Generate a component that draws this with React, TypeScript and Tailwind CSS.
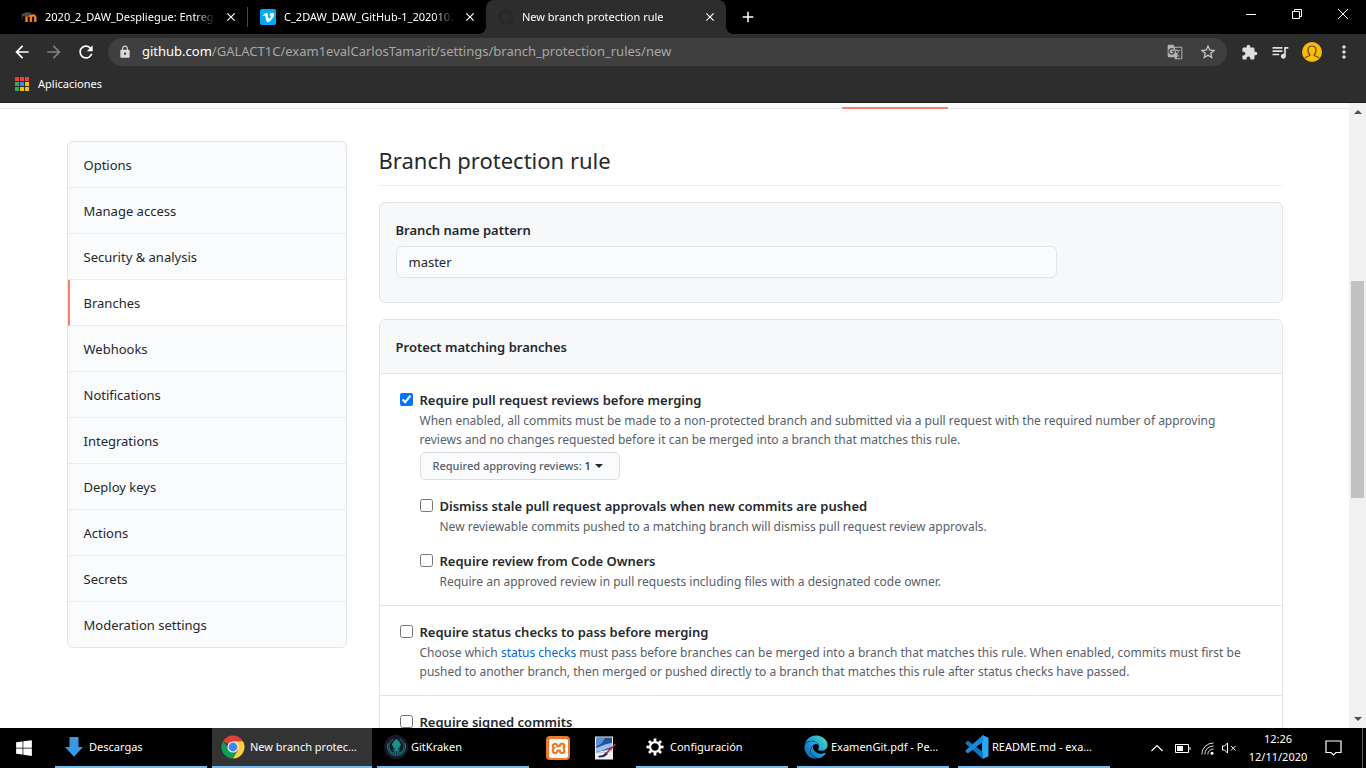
import React from "react";
import {
  MdAdd,
  MdArrowBack,
  MdArrowForward,
  MdClose,
  MdExtension,
  MdGTranslate,
  MdLock,
  MdMoreVert,
  MdQueueMusic,
  MdRefresh,
  MdStarOutline,
} from "react-icons/md";
import { FaEdge, FaGithub, FaWindows } from "react-icons/fa";
import { SiGitkraken, SiVimeo, SiXampp } from "react-icons/si";

const settingsLinks = [
  "Options",
  "Manage access",
  "Security & analysis",
  "Branches",
  "Webhooks",
  "Notifications",
  "Integrations",
  "Deploy keys",
  "Actions",
  "Secrets",
  "Moderation settings",
];

const appDots = [
  "bg-[#ea4335]", "bg-[#ea4335]", "bg-[#ea4335]",
  "bg-[#34a853]", "bg-[#4285f4]", "bg-[#fbbc05]",
  "bg-[#34a853]", "bg-[#fbbc05]", "bg-[#fbbc05]",
];

function MoodleIcon() {
  return (
    <svg viewBox="0 0 16 16" className="size-4 shrink-0" aria-hidden="true">
      <path d="M5.5 13V8.6a2.2 2.2 0 0 1 4.4 0V13M9.9 13V8.6a2.2 2.2 0 0 1 4.4 0V13" fill="none" stroke="#f98012" strokeWidth="2.4" />
      <path d="M0 5.6 6 3l5 1.2-4 3.4-3.4-.4L1.4 7.4V11H.7V6.6z" fill="#4a4a48" />
    </svg>
  );
}

function ChromeIcon() {
  return (
    <svg viewBox="0 0 24 24" className="size-6 shrink-0" aria-hidden="true">
      <path d="M12 12 2.04 6.25A11.5 11.5 0 0 1 21.96 6.25H12z" fill="#db4437" />
      <path d="M12 12H6.8L2.04 6.25A11.5 11.5 0 0 0 12 23.5L17 15z" fill="#0f9d58" />
      <path d="M12 6.25H21.96A11.5 11.5 0 0 1 12 23.5L17.2 14.8z" fill="#ffcd40" />
      <circle cx="12" cy="12" r="5.6" fill="#f1f1f1" />
      <circle cx="12" cy="12" r="4.4" fill="#4285f4" />
    </svg>
  );
}

function DownloadIcon() {
  return (
    <svg viewBox="0 0 20 22" className="h-[22px] w-5 shrink-0" aria-hidden="true">
      <path d="M5.5 1h9v10H19l-9 9.8L1 11h4.5z" fill="#3a97e4" />
    </svg>
  );
}

function KrakenIcon() {
  return (
    <span className="grid size-6 shrink-0 place-items-center rounded-full bg-[#171a2b] text-[#179287]">
      <SiGitkraken size={19} />
    </span>
  );
}

function PaintIcon() {
  return (
    <svg viewBox="0 0 22 24" className="h-6 w-[22px]" aria-hidden="true">
      <rect x="1" y="0.5" width="18" height="23" fill="#eef0f4" />
      <rect x="2" y="1.5" width="16" height="15" fill="#24509c" />
      <path d="M2 2h9l-3 5-6 4z" fill="#5d8fd6" />
      <path d="M2 12c4-1 8-4 16-5v4c-5 1-9 4-16 5z" fill="#9fc0e8" />
      <path d="M2 16.5c5-1 9-3 16-3v3.5z" fill="#dce6f2" />
      <path d="m4 20 5-1 3-3 2 2-4 3-5 .5z" fill="#1b2a5c" />
      <path d="M12 17.5 21.5 8" stroke="#c1272d" strokeWidth="1.6" />
    </svg>
  );
}

function GearIcon() {
  return (
    <svg viewBox="0 0 20 20" className="size-[18px] shrink-0" aria-hidden="true" fill="#fff">
      <circle cx="10" cy="10" r="5.5" fill="none" stroke="#fff" strokeWidth="2.6" />
      {[0, 45, 90, 135, 180, 225, 270, 315].map((a) => (
        <rect key={a} x="8.5" y="0.5" width="3" height="3.5" transform={`rotate(${a} 10 10)`} />
      ))}
    </svg>
  );
}

function EdgeIcon() {
  return (
    <>
      <svg width="0" height="0" className="absolute" aria-hidden="true">
        <linearGradient id="edge" x1="0" y1="1" x2="1" y2="0">
          <stop offset="0" stopColor="#0c59a4" />
          <stop offset="0.5" stopColor="#1f9fde" />
          <stop offset="0.75" stopColor="#35c1c9" />
          <stop offset="1" stopColor="#66eb6e" />
        </linearGradient>
      </svg>
      <FaEdge size={24} fill="url(#edge)" className="shrink-0" />
    </>
  );
}

function CodeIcon() {
  return (
    <svg viewBox="0 0 24 24" className="size-6 shrink-0" aria-hidden="true">
      <path d="m17.5 0 6 2.8v18.4l-6 2.8L17 18V6z" fill="#2aa8f2" />
      <path d="M.6 7.6 2.3 6c.3-.3.8-.3 1.2 0L18 17.2V24L.6 8.8c-.3-.4-.3-.8 0-1.2z" fill="#0a76c4" />
      <path d="M.6 16.4 2.3 18c.3.3.8.3 1.2 0L18 6.8V0L.6 15.2c-.3.4-.3.8 0 1.2z" fill="#1a8ad8" />
    </svg>
  );
}

function Tab({ icon, title, active = false }: { icon: React.ReactNode; title: string; active?: boolean }) {
  return (
    <div
      className={
        active
          ? "relative flex h-full w-60 items-center gap-2 rounded-t-lg bg-[#2d2d2d] pr-2 pl-3"
          : "flex h-full w-[238px] items-center gap-2 pr-2 pl-3"
      }
    >
      {active && (
        <>
          <span className="absolute bottom-0 -left-2 size-2 bg-[radial-gradient(circle_at_0_0,black_8px,#2d2d2d_8px)]" />
          <span className="absolute -right-2 bottom-0 size-2 bg-[radial-gradient(circle_at_100%_0,black_8px,#2d2d2d_8px)]" />
        </>
      )}
      {icon}
      <span className="min-w-0 flex-1 overflow-hidden whitespace-nowrap [mask-image:linear-gradient(to_right,black_88%,transparent)]">
        {title}
      </span>
      <button aria-label="Cerrar pestaña" className="grid size-4 place-items-center">
        <MdClose size={14} />
      </button>
    </div>
  );
}

function Task({ icon, title, active = false }: { icon: React.ReactNode; title: string; active?: boolean }) {
  return (
    <button
      className={
        "flex h-full min-w-0 items-center border-b-2 border-[#76b9ed] text-left " +
        (active ? "w-40 gap-1 bg-[#333] pr-3 pl-2" : "w-[152px] gap-0.5 pr-2.5 pl-1.5")
      }
    >
      <span className="grid w-[26px] shrink-0 place-items-center">{icon}</span>
      <span className="truncate">{title}</span>
    </button>
  );
}

function Rule({ id, title, checked = false, children }: { id: string; title: string; checked?: boolean; children?: React.ReactNode }) {
  return (
    <div className="flex items-start gap-[7px]">
      <input id={id} type="checkbox" defaultChecked={checked} className="mt-[3px] size-[13px] shrink-0" />
      <div className="min-w-0 flex-1">
        <label htmlFor={id} className="block leading-[21px] font-semibold">
          {title}
        </label>
        {children}
      </div>
    </div>
  );
}

function Hint({ children }: { children: React.ReactNode }) {
  return <p className="text-[12px] leading-[19px] text-[#586069]">{children}</p>;
}

export default function App() {
  return (
    <div className="flex h-screen flex-col overflow-hidden bg-white font-['Noto_Sans','Open_Sans',sans-serif] text-[13px] text-[#24292e]">
      <header className="shrink-0 border-b border-[#1c1c1e] bg-[#2d2d2d] text-white">
        <div className="flex h-[34px] items-center bg-black pl-[9px] text-[11px]">
          <Tab icon={<MoodleIcon />} title="2020_2_DAW_Despliegue: Entrega de tareas" />
          <div className="h-5 w-px bg-[#4a4a4a]" />
          <Tab
            icon={
              <span className="grid size-4 shrink-0 place-items-center rounded-xs bg-[#03a9f4]">
                <SiVimeo size={11} />
              </span>
            }
            title="C_2DAW_DAW_GitHub-1_20201021"
          />
          <Tab active icon={<FaGithub size={16} className="shrink-0 text-[#24292e]" />} title="New branch protection rule" />
          <button aria-label="Nueva pestaña" className="ml-3 grid size-5 place-items-center">
            <MdAdd size={18} />
          </button>
          <div className="ml-auto flex h-full items-start">
            <button aria-label="Minimizar" className="grid h-7 w-[46px] place-items-center">
              <svg viewBox="0 0 10 10" className="size-2.5" stroke="#fff"><path d="M0 5.5h10" /></svg>
            </button>
            <button aria-label="Restaurar" className="grid h-7 w-[46px] place-items-center">
              <svg viewBox="0 0 10 10" className="size-2.5" fill="none" stroke="#fff"><path d="M.5 2.5h7v7h-7zM2.5 2.5v-2h7v7h-2" /></svg>
            </button>
            <button aria-label="Cerrar" className="grid h-7 w-[46px] place-items-center">
              <svg viewBox="0 0 10 10" className="size-2.5" stroke="#fff"><path d="m0 0 10 10M10 0 0 10" /></svg>
            </button>
          </div>
        </div>
        <div className="flex h-9 items-center px-3">
          <button aria-label="Atrás" className="mr-3"><MdArrowBack size={20} /></button>
          <button aria-label="Adelante" className="mr-3 text-[#808080]"><MdArrowForward size={20} /></button>
          <button aria-label="Recargar" className="mr-3"><MdRefresh size={20} /></button>
          <div className="flex h-7 min-w-0 flex-1 items-center rounded-full bg-[#3f3f3f] px-2.5 text-[13px]">
            <MdLock size={14} className="mr-2.5 shrink-0 text-[#dadada]" />
            <label htmlFor="address">github.com</label>
            <input
              id="address"
              className="min-w-0 flex-1 bg-transparent text-[#a8a8a8] outline-none"
              defaultValue="/GALACT1C/exam1evalCarlosTamarit/settings/branch_protection_rules/new"
            />
            <button aria-label="Traducir" className="mr-4 text-[#b4b4b4]"><MdGTranslate size={16} /></button>
            <button aria-label="Favorito" className="text-[#cfcfcf]"><MdStarOutline size={18} /></button>
          </div>
          <div className="ml-3.5 flex items-center gap-3 text-[#dedede]">
            <button aria-label="Extensiones"><MdExtension size={17} /></button>
            <button aria-label="Control multimedia"><MdQueueMusic size={20} /></button>
            <button aria-label="Perfil" className="grid size-5 place-items-center rounded-full bg-[#fbbc04]">
              <svg viewBox="0 0 20 20" className="size-5" fill="none" stroke="#5b4a1c" strokeWidth="1.2">
                <path d="M3 16c1-2 5-1.5 5-3-3-3-3-9 2-9s5 6 2 9c0 1.5 4 1 5 3" />
              </svg>
            </button>
            <button aria-label="Menú"><MdMoreVert size={20} /></button>
          </div>
        </div>
        <div className="flex h-8 items-center pb-1 pl-[15px] text-[11px]">
          <a href="#apps" className="flex items-center gap-[9px]">
            <span className="grid grid-cols-3 gap-px">
              {appDots.map((c, i) => (
                <span key={i} className={"size-1 " + c} />
              ))}
            </span>
            Aplicaciones
          </a>
        </div>
      </header>

      <div className="flex min-h-0 flex-1">
        <div className="min-w-0 flex-1 overflow-hidden">
          <div className="h-1.5 border-b border-[#e1e4e8] bg-[#fafbfc]">
            <div className="mx-auto flex h-1.5 max-w-[1216px] justify-end pr-[335px]">
              <div className="w-[106px] border-b-2 border-[#f9826c]" />
            </div>
          </div>
          <div className="mx-auto flex max-w-[1216px] items-start gap-8 pt-8">
            <nav className="w-[280px] shrink-0 overflow-hidden rounded-md border border-[#e1e4e8] bg-[#fafbfc]">
              {settingsLinks.map((name) => (
                <a
                  key={name}
                  href="#settings"
                  className={
                    "block border-b border-[#eaecef] pt-[13px] pb-3 leading-5 last:border-b-0 " +
                    (name === "Branches" ? "border-l-2 border-l-[#f9826c] bg-white pl-3.5" : "pl-4")
                  }
                >
                  {name}
                </a>
              ))}
            </nav>

            <main className="min-w-0 flex-1">
              <h1 className="border-b border-[#eaecef] pt-[3px] pb-[9px] text-[22px] leading-8">Branch protection rule</h1>
              <section className="mt-4 rounded-md border border-[#e1e4e8] bg-[#f6f8fa] px-4 pt-[17px] pb-6">
                <label htmlFor="pattern" className="mb-[5px] block leading-[21px] font-semibold">
                  Branch name pattern
                </label>
                <input
                  id="pattern"
                  defaultValue="master"
                  className="block h-8 w-[76%] rounded-md border border-[#e1e4e8] bg-[#fafbfc] px-3"
                />
              </section>
              <section className="mt-4 rounded-md border border-[#e1e4e8]">
                <h2 className="rounded-t-md border-b border-[#e1e4e8] bg-[#f6f8fa] px-4 pt-[17px] pb-[15px] leading-[21px] font-semibold">
                  Protect matching branches
                </h2>
                <div className="border-b border-[#e1e4e8] pt-4 pr-8 pb-3.5 pl-5">
                  <Rule id="reviews" title="Require pull request reviews before merging" checked>
                    <Hint>
                      When enabled, all commits must be made to a non-protected branch and submitted via a pull request with the required number of approving reviews and no changes requested before it can be merged into a branch that matches this rule.
                    </Hint>
                    <button
                      aria-haspopup="menu"
                      className="mt-[3px] mb-4 flex h-7 w-[200px] items-center rounded-md border border-[#d9dbdf] bg-[#fafbfc] px-3 text-[11px] whitespace-nowrap text-[#586069]"
                    >
                      <span className="font-medium">
                        Required approving reviews: <span className="text-[#24292e]">1</span>
                      </span>
                      <span className="ml-1 border-x-4 border-t-4 border-x-transparent border-t-[#24292e]" />
                    </button>
                    <div className="flex flex-col gap-[15px]">
                      <Rule id="stale" title="Dismiss stale pull request approvals when new commits are pushed">
                        <Hint>New reviewable commits pushed to a matching branch will dismiss pull request review approvals.</Hint>
                      </Rule>
                      <Rule id="owners" title="Require review from Code Owners">
                        <Hint>Require an approved review in pull requests including files with a designated code owner.</Hint>
                      </Rule>
                    </div>
                  </Rule>
                </div>
                <div className="border-b border-[#e1e4e8] pt-4 pr-8 pb-3.5 pl-5">
                  <Rule id="status" title="Require status checks to pass before merging">
                    <Hint>
                      Choose which <a href="#status-checks" className="text-[#0366d6]">status checks</a> must pass before branches can be merged into a branch that matches this rule. When enabled, commits must first be pushed to another branch, then merged or pushed directly to a branch that matches this rule after status checks have passed.
                    </Hint>
                  </Rule>
                </div>
                <div className="pt-4 pr-8 pb-3.5 pl-5">
                  <Rule id="signed" title="Require signed commits" />
                </div>
              </section>
            </main>
          </div>
        </div>
        <div className="flex w-[17px] shrink-0 flex-col items-center bg-[#f1f1f1] py-[7px]" aria-hidden="true">
          <div className="border-x-4 border-b-4 border-x-transparent border-b-[#505050]" />
          <div className="grow-[167]" />
          <div className="w-[13px] grow-[217] bg-[#c1c1c1]" />
          <div className="grow-[219]" />
          <div className="border-x-4 border-t-4 border-x-transparent border-t-[#505050]" />
        </div>
      </div>

      <footer className="flex h-10 shrink-0 items-center bg-black text-[11px] text-white">
        <button aria-label="Inicio" className="grid h-full w-12 place-items-center">
          <FaWindows size={18} />
        </button>
        <div className="flex h-full items-center gap-[5px] pl-[7px]">
          <Task icon={<DownloadIcon />} title="Descargas" />
          <Task icon={<ChromeIcon />} title="New branch protection rule - Google Chrome" active />
          <Task icon={<KrakenIcon />} title="GitKraken" />
        </div>
        <button aria-label="XAMPP" className="ml-[17px] grid size-6 place-items-center rounded-sm bg-[#ee7b2b]">
          <SiXampp size={19} />
        </button>
        <button aria-label="Paint" className="ml-6"><PaintIcon /></button>
        <div className="ml-5 flex h-full items-center gap-[9px]">
          <Task icon={<GearIcon />} title="Configuración" />
          <Task icon={<EdgeIcon />} title="ExamenGit.pdf - Perfil 1: Microsoft Edge" />
          <Task icon={<CodeIcon />} title="README.md - exam1eval - Visual Studio Code" />
        </div>
        <div className="ml-auto flex h-full items-center">
          <button aria-label="Iconos ocultos" className="mr-3">
            <svg viewBox="0 0 12 8" className="h-2 w-3" fill="none" stroke="#fff" strokeWidth="1.2"><path d="m.5 7 5.5-5.5L11.5 7" /></svg>
          </button>
          <svg viewBox="0 0 16 10" className="mr-2.5 h-2.5 w-4" fill="none" stroke="#fff" aria-hidden="true">
            <path d="M.5 1.5h13v8H.5zM15 4v3" />
            <path d="M2 3h6v5H2z" fill="#fff" stroke="none" />
          </svg>
          <svg viewBox="0 0 13 13" className="mr-2 size-[13px]" fill="none" stroke="#ddd" aria-hidden="true">
            <path d="M.8 12.5A11.5 11.5 0 0 1 12.5 1M3.8 12.5A8.5 8.5 0 0 1 12.5 4M6.8 12.5A5.5 5.5 0 0 1 12.5 7" />
            <circle cx="11" cy="11.2" r="1.5" fill="#fff" stroke="none" />
          </svg>
          <svg viewBox="0 0 15 12" className="mr-2.5 h-3 w-[15px]" fill="none" stroke="#fff" aria-hidden="true">
            <path d="M.5 4h2l3-3v10l-3-3h-2zM9 4l4.5 4.5M13.5 4 9 8.5" />
          </svg>
          <div className="w-[62px] text-center leading-[18px]">
            <div>12:26</div>
            <div>12/11/2020</div>
          </div>
          <button aria-label="Notificaciones" className="mr-5 ml-4">
            <svg viewBox="0 0 17 16" className="h-4 w-[17px]" fill="none" stroke="#fff" strokeWidth="1.2"><path d="M1 1h15v11.5h-5L8.5 15 6 12.5H1z" /></svg>
          </button>
          <div className="h-full w-1 border-l border-[#5a5a5a]" />
        </div>
      </footer>
    </div>
  );
}
